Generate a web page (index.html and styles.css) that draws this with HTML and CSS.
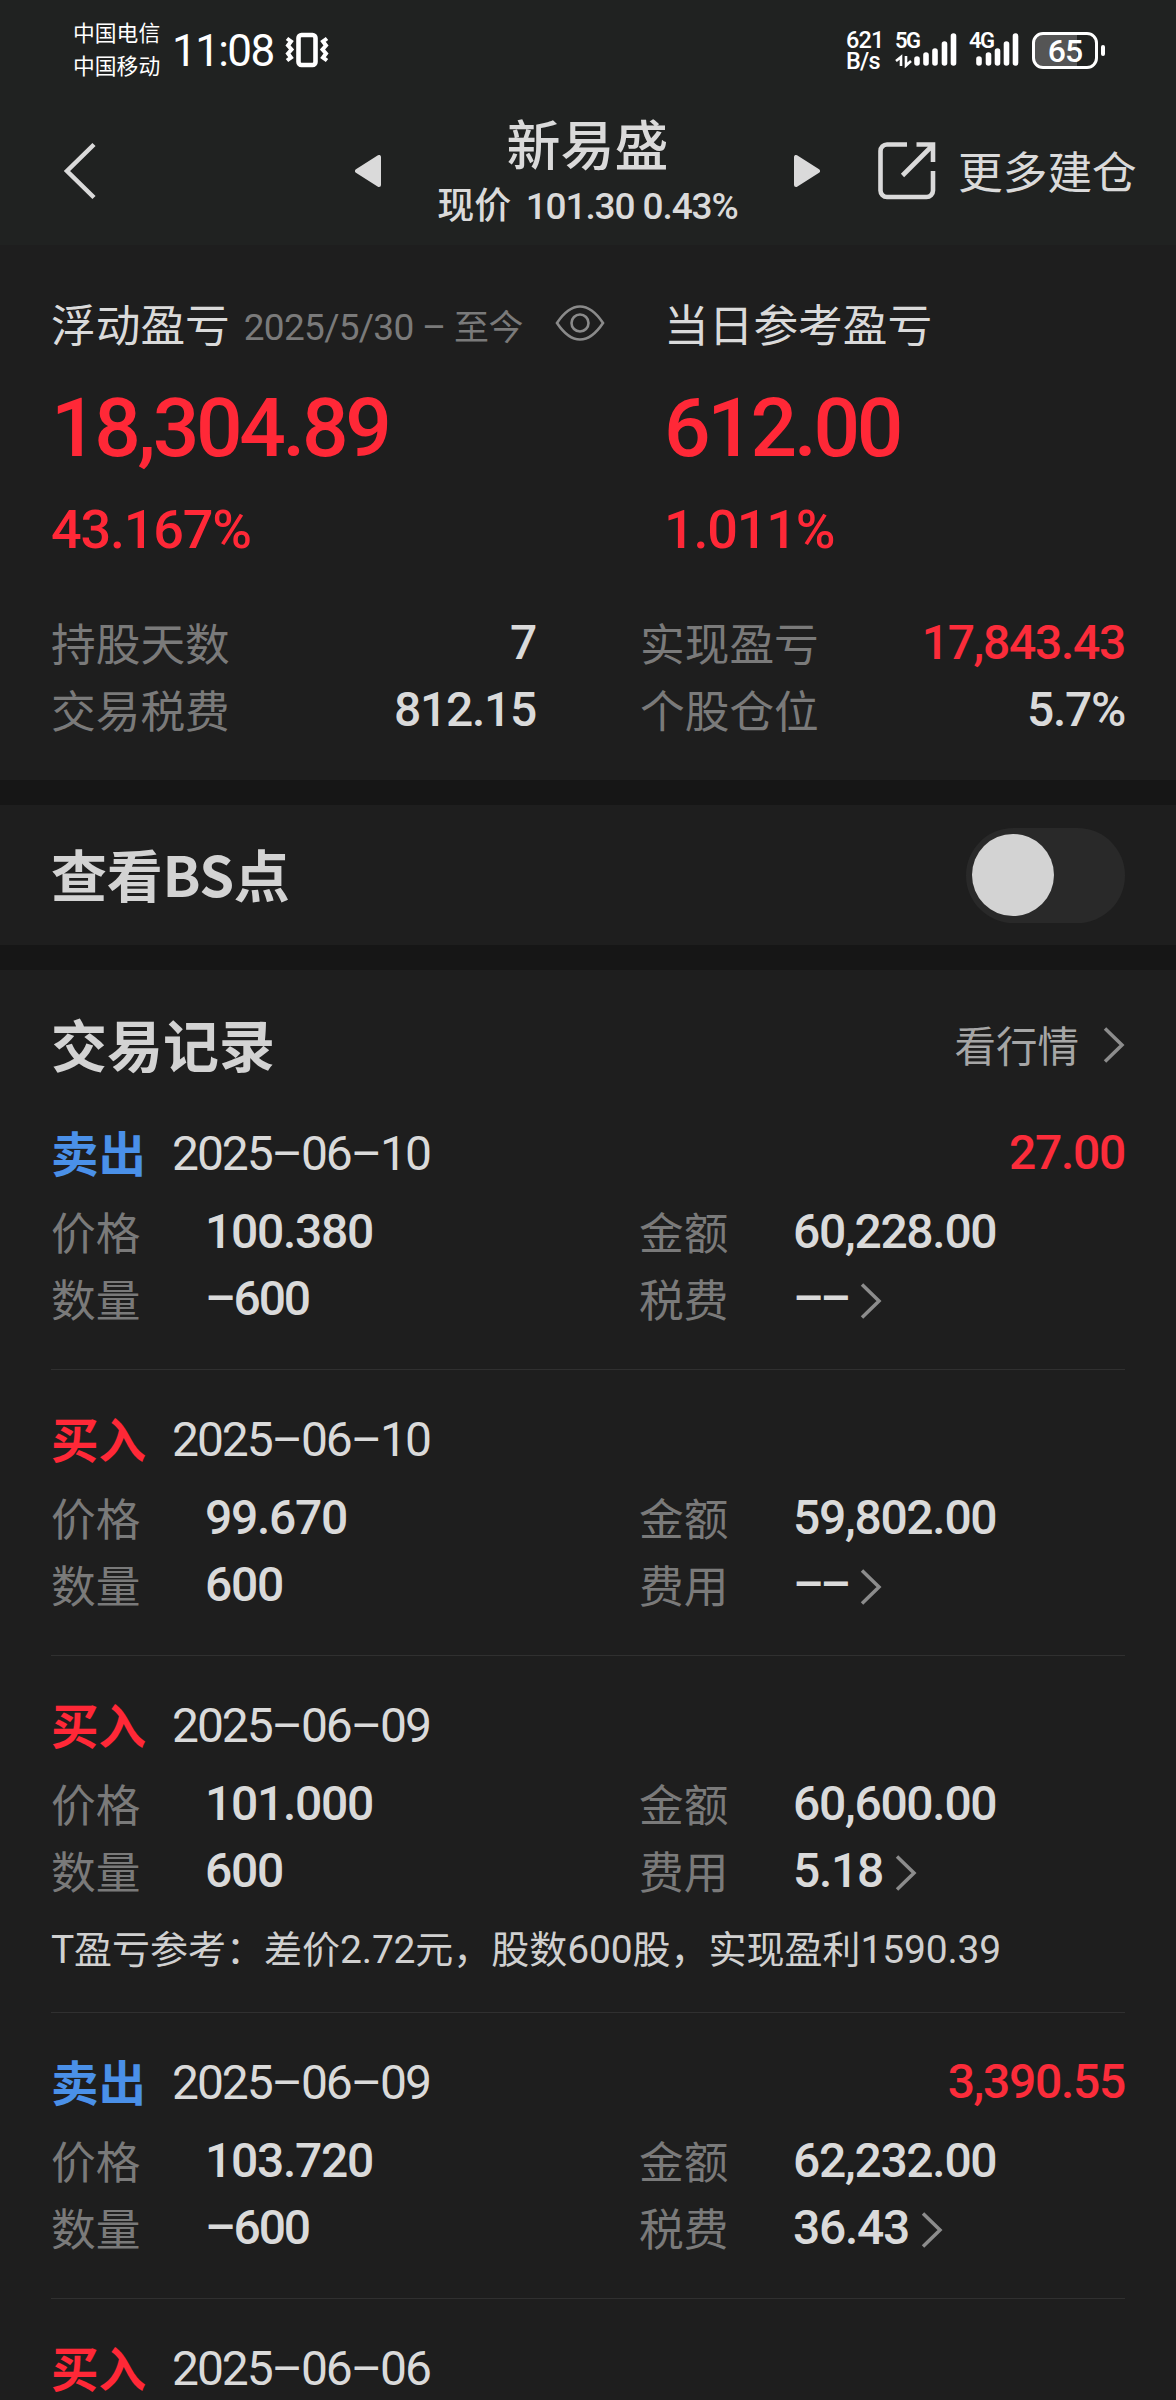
FILE: index.html
```
<!DOCTYPE html>
<html lang="zh-CN">
<head>
    <meta charset="utf-8">
    <title>新易盛</title>
    <link rel="stylesheet" href="styles.css">
</head>

<body>
    <header class="header">
        <div class="status-bar">
            <div class="carriers">
                <span>中国电信</span>
                <span>中国移动</span>
            </div>
            <span class="clock">11:08</span>
            <svg class="vibrate" width="44" height="36" viewBox="0 0 44 36" fill="none" stroke="#fff">
                <rect x="13.500" y="3" width="17" height="30" rx="3" stroke-width="4.600"/>
                <path d="M2 6.500l4 3-3 4 3.500 4-3.500 4 3 4-4 3M42 6.500l-4 3 3 4-3.500 4 3.500 4-3 4 4 3" stroke-width="4"/>
            </svg>
            <div class="net-speed">
                <span>621</span>
                <span>B/s</span>
            </div>
            <div class="signal signal-5g">
                <span class="signal-type">5G</span>
                <svg width="64" height="36" viewBox="0 0 64 36" fill="none" stroke="#fff">
                    <path d="M22 27v4M31 23v8M40 19v12M49.500 12v19M58.500 4v27" stroke-width="5.600" stroke-linecap="round"/>
                    <path d="M6 34V25L1 29M11 24v9.500L16 29" stroke-width="2.600"/>
                </svg>
            </div>
            <div class="signal signal-4g">
                <span class="signal-type">4G</span>
                <svg width="52" height="36" viewBox="0 0 52 36" fill="none" stroke="#fff">
                    <path d="M10 27v4M19.500 23v8M28.500 19v12M37.500 12v19M46.500 4v27" stroke-width="5.600" stroke-linecap="round"/>
                </svg>
            </div>
            <div class="battery">
                <div class="battery-body">65</div>
                <div class="battery-tip"></div>
            </div>
        </div>

        <nav class="nav">
            <svg width="36" height="60" viewBox="0 0 36 60" fill="none" stroke="#dadada" stroke-width="4.500">
                <path d="M32 3.500L5 30L32 56.500"/>
            </svg>
            <svg class="prev" width="26" height="32" viewBox="0 0 26 32" fill="#dadada" stroke="#dadada" stroke-width="4" stroke-linejoin="round">
                <path d="M24 2v28L2 16z"/>
            </svg>
            <div class="stock">
                <h1>新易盛</h1>
                <p>现价 <span class="quote">101.30 0.43%</span></p>
            </div>
            <svg class="next" width="26" height="32" viewBox="0 0 26 32" fill="#dadada" stroke="#dadada" stroke-width="4" stroke-linejoin="round">
                <path d="M2 2v28L24 16z"/>
            </svg>
            <svg class="share" width="58" height="58" viewBox="0 0 58 58" fill="none" stroke="#dadada" stroke-width="4.600">
                <path d="M29 2.500H9a6.500 6.500 0 0 0-6.500 6.500v39.500a6.500 6.500 0 0 0 6.500 6.500h39.500a6.500 6.500 0 0 0 6.500-6.500V29"/>
                <path d="M38.500 2.500H55V20M24.500 33.500L54 4"/>
            </svg>
            <span class="more">更多建仓</span>
        </nav>
    </header>

    <section class="summary">
        <div class="profit">
            <div class="profit-item">
                <div class="profit-title">浮动盈亏
                    <span class="period">2025/5/30 – <span class="cn">至今</span></span>
                    <svg width="50" height="38" viewBox="0 0 50 38" fill="none" stroke="#8a8a8a" stroke-width="2.600">
                        <path d="M2 19C10 7 17 2.500 25 2.500S40 7 48 19C40 31 33 35.500 25 35.500S10 31 2 19z"/>
                        <circle cx="25" cy="19" r="8.500"/>
                    </svg>
                </div>
                <div class="profit-value">18,304.89</div>
                <div class="profit-rate">43.167%</div>
            </div>
            <div class="profit-item">
                <div class="profit-title">当日参考盈亏</div>
                <div class="profit-value">612.00</div>
                <div class="profit-rate">1.011%</div>
            </div>
        </div>
        <div class="stats">
            <div class="stat"><span class="label">持股天数</span><span class="num">7</span></div>
            <div class="stat"><span class="label">实现盈亏</span><span class="num red">17,843.43</span></div>
            <div class="stat"><span class="label">交易税费</span><span class="num">812.15</span></div>
            <div class="stat"><span class="label">个股仓位</span><span class="num">5.7%</span></div>
        </div>
    </section>

    <section class="bs-switch">
        <h2>查看BS点</h2>
        <div class="toggle"><div class="knob"></div></div>
    </section>

    <section class="records">
        <div class="records-title">
            <h2>交易记录</h2>
            <span class="market">看行情
                <svg class="arrow" width="22" height="38" viewBox="0 0 22 38"><path d="M2 2.500L19 19L2 35.500"/></svg>
            </span>
        </div>

        <div class="record">
            <div class="record-head">
                <span class="side sell">卖出</span>
                <span class="date">2025–06–10</span>
                <span class="num red">27.00</span>
            </div>
            <div class="record-body">
                <div class="field"><span class="label">价格</span><span class="num">100.380</span></div>
                <div class="field"><span class="label">金额</span><span class="num">60,228.00</span></div>
                <div class="field"><span class="label">数量</span><span class="num minus">–600</span></div>
                <div class="field"><span class="label">税费</span><span class="num empty">––</span>
                    <svg class="arrow" width="22" height="38" viewBox="0 0 22 38"><path d="M2 2.500L19 19L2 35.500"/></svg>
                </div>
            </div>
        </div>

        <div class="record">
            <div class="record-head">
                <span class="side buy">买入</span>
                <span class="date">2025–06–10</span>
            </div>
            <div class="record-body">
                <div class="field"><span class="label">价格</span><span class="num">99.670</span></div>
                <div class="field"><span class="label">金额</span><span class="num">59,802.00</span></div>
                <div class="field"><span class="label">数量</span><span class="num">600</span></div>
                <div class="field"><span class="label">费用</span><span class="num empty">––</span>
                    <svg class="arrow" width="22" height="38" viewBox="0 0 22 38"><path d="M2 2.500L19 19L2 35.500"/></svg>
                </div>
            </div>
        </div>

        <div class="record">
            <div class="record-head">
                <span class="side buy">买入</span>
                <span class="date">2025–06–09</span>
            </div>
            <div class="record-body">
                <div class="field"><span class="label">价格</span><span class="num">101.000</span></div>
                <div class="field"><span class="label">金额</span><span class="num">60,600.00</span></div>
                <div class="field"><span class="label">数量</span><span class="num">600</span></div>
                <div class="field"><span class="label">费用</span><span class="num">5.18</span>
                    <svg class="arrow" width="22" height="38" viewBox="0 0 22 38"><path d="M2 2.500L19 19L2 35.500"/></svg>
                </div>
            </div>
            <p class="note"><b>T</b>盈亏参考：差价<b>2.72</b>元，股数<b>600</b>股，实现盈利<b>1590.39</b></p>
        </div>

        <div class="record">
            <div class="record-head">
                <span class="side sell">卖出</span>
                <span class="date">2025–06–09</span>
                <span class="num red">3,390.55</span>
            </div>
            <div class="record-body">
                <div class="field"><span class="label">价格</span><span class="num">103.720</span></div>
                <div class="field"><span class="label">金额</span><span class="num">62,232.00</span></div>
                <div class="field"><span class="label">数量</span><span class="num minus">–600</span></div>
                <div class="field"><span class="label">税费</span><span class="num">36.43</span>
                    <svg class="arrow" width="22" height="38" viewBox="0 0 22 38"><path d="M2 2.500L19 19L2 35.500"/></svg>
                </div>
            </div>
        </div>

        <div class="record">
            <div class="record-head">
                <span class="side buy">买入</span>
                <span class="date">2025–06–06</span>
            </div>
        </div>
    </section>
</body>
</html>
```
FILE: styles.css
```
* {
    box-sizing: border-box;
    margin: 0;
    padding: 0;
}

body {
    width: 1176px;
    height: 2400px;
    overflow: hidden;
    font-family: "Noto Sans CJK SC", sans-serif;
    background-color: #161616;
    color: #dadada;
}

svg {
    flex: none;
}

/* header */
.header {
    height: 245px;
    background-color: #202221;
}

.status-bar {
    display: flex;
    align-items: center;
    height: 100px;
    padding-left: 73px;
    color: #fff;
    white-space: nowrap;
}

.carriers {
    width: 99px;
    font-size: 21.8px;
    line-height: 33px;
    padding-bottom: 5px;
}

.carriers span,
.net-speed span {
    display: block;
}

.clock {
    width: 113px;
    padding-top: 2px;
    font-family: Roboto, sans-serif;
    font-size: 44px;
    letter-spacing: -1.6px;
    line-height: 60px;
}

.net-speed {
    width: 49px;
    margin-left: 517px;
    padding-top: 1px;
    font-family: Roboto, sans-serif;
    font-size: 23.5px;
    font-weight: 500;
    line-height: 21px;
    letter-spacing: -0.8px;
}

.signal {
    display: flex;
    position: relative;
}

.signal-4g {
    margin-left: 10px;
}

.signal-type {
    position: absolute;
    left: 0;
    top: 0;
    font-family: Roboto, sans-serif;
    font-size: 22px;
    font-weight: 600;
    line-height: 18px;
    letter-spacing: -1.5px;
}

.battery {
    display: flex;
    align-items: center;
    gap: 3px;
    margin-left: 11px;
}

.battery-body {
    width: 66px;
    height: 37px;
    border: 3px solid #fff;
    border-radius: 11px;
    background: linear-gradient(to right, #555 70%, transparent 70%);
    font-family: Roboto, sans-serif;
    font-size: 32px;
    font-weight: 500;
    line-height: 33px;
    letter-spacing: -1px;
    text-align: center;
}

.battery-tip {
    width: 4px;
    height: 11px;
    border-radius: 2px;
    background-color: #fff;
}

.nav {
    display: flex;
    align-items: center;
    height: 142px;
    padding-left: 62px;
}

.prev {
    margin-left: 257px;
    margin-bottom: 1px;
}

.next {
    margin-bottom: 1px;
}

.stock {
    width: 413px;
    padding-top: 8px;
    text-align: center;
}

.stock h1 {
    font-size: 54px;
    font-weight: 500;
    line-height: 60px;
}

.stock p {
    font-size: 37px;
    font-weight: 500;
    line-height: 60px;
    white-space: nowrap;
}

.quote {
    margin-left: 6px;
    font-family: Roboto, sans-serif;
    letter-spacing: -1.1px;
}

.share {
    margin-left: 58px;
}

.more {
    margin-left: 22px;
    padding-bottom: 2px;
    font-size: 44.7px;
    line-height: 60px;
    white-space: nowrap;
}

/* summary */
.summary {
    height: 535px;
    padding: 48px 51px 37px;
    background-color: #1e1e1e;
}

.profit {
    display: grid;
    grid-template-columns: 613px 1fr;
    margin-bottom: 49px;
}

.profit-title {
    display: flex;
    align-items: center;
    height: 60px;
    font-size: 44.7px;
    line-height: 60px;
    white-space: nowrap;
}

.period {
    width: 311px;
    margin-left: 14px;
    padding-top: 6px;
    font-family: Roboto, sans-serif;
    font-size: 37px;
    letter-spacing: -0.7px;
    color: #7a7a7a;
}

.period .cn {
    font-family: "Noto Sans CJK SC", sans-serif;
    font-size: 35px;
}

.profit-value,
.profit-rate {
    font-family: Roboto, sans-serif;
    font-weight: 500;
    color: #ff2837;
}

.profit-value {
    margin-top: 25px;
    font-size: 82px;
    line-height: 100px;
    letter-spacing: -3.3px;
}

.profit-rate {
    margin-top: 22px;
    font-size: 54px;
    line-height: 60px;
    letter-spacing: -1.2px;
}

.stats {
    display: grid;
    grid-template-columns: 485px 485px;
    column-gap: 104px;
}

.stat,
.field {
    display: flex;
    align-items: center;
    height: 67px;
    line-height: 67px;
    white-space: nowrap;
}

.stat {
    justify-content: space-between;
}

.label {
    padding-bottom: 2px;
    font-size: 44.7px;
    color: #7a7a7a;
}

.num,
.date {
    font-family: Roboto, sans-serif;
    font-size: 48px;
    font-weight: 500;
    letter-spacing: -1.3px;
}

.num.minus {
    letter-spacing: -2.2px;
}

.num.empty {
    letter-spacing: -3.5px;
}

.red {
    color: #fb2c3a;
}

/* BS switch */
.bs-switch {
    display: flex;
    align-items: center;
    justify-content: space-between;
    height: 140px;
    margin: 25px 0;
    padding: 0 51px;
    background-color: #1e1e1e;
}

h2 {
    font-size: 56px;
    font-weight: 700;
    line-height: 80px;
    color: #d3d3d3;
}

.bs-switch h2 {
    padding-bottom: 4px;
    letter-spacing: -0.3px;
}

.toggle {
    width: 159px;
    height: 95px;
    padding: 6px;
    border-radius: 48px;
    background-color: #292929;
}

.knob {
    width: 82px;
    height: 82px;
    border-radius: 50%;
    background-color: #d3d3d3;
}

/* trade records */
.records {
    height: 1430px;
    padding: 33px 51px 0;
    background-color: #1e1e1e;
}

.records-title {
    display: flex;
    align-items: center;
    justify-content: space-between;
    height: 81px;
}

.records-title h2 {
    padding-bottom: 2px;
}

.market {
    display: flex;
    align-items: center;
    gap: 24px;
    font-size: 41.5px;
    color: #a6a6a6;
}

.market .arrow {
    margin-top: 2px;
}

.arrow {
    fill: none;
    stroke: #8c8c8c;
    stroke-width: 3.5;
}

.record {
    padding: 35px 0 37px;
    border-bottom: 1px solid #303030;
}

.record-head {
    display: flex;
    align-items: center;
    height: 68px;
    margin-bottom: 11px;
    line-height: 68px;
}

.record-head .num {
    margin-left: auto;
}

.side {
    width: 121px;
    padding-bottom: 2px;
    font-size: 47.5px;
    font-weight: 700;
}

.sell {
    color: #4a90e8;
}

.buy {
    color: #ff2837;
}

.date {
    padding-top: 1px;
    font-weight: 450;
    letter-spacing: -2.1px;
}

.record-body {
    display: grid;
    grid-template-columns: 588px 1fr;
}

.field .label {
    width: 154px;
}

.field .arrow {
    margin-left: 12px;
    margin-top: 4px;
}

.note {
    height: 56px;
    margin-top: 15px;
    font-size: 38px;
    line-height: 56px;
    color: #d0d0d0;
    white-space: nowrap;
}

.note b {
    font-family: Roboto, sans-serif;
    font-size: 39px;
    font-weight: 400;
    letter-spacing: -0.2px;
}
```
